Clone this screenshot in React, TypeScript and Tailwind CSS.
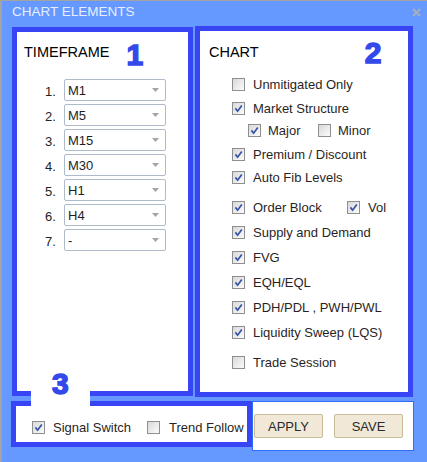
import { clsx } from "clsx";

const TIMEFRAMES = ["M1", "M5", "M15", "M30", "H1", "H4", "-"];

interface CheckProps {
  on?: boolean;
}

function Check({ on = false }: CheckProps) {
  return (
    <span className="flex h-[13px] w-[13px] shrink-0 items-center justify-center border border-[#8e9090] bg-linear-to-br from-[#d9d9d9] to-[#fbfbfb]">
      {on && (
        <svg width="9" height="9" viewBox="0 0 9 9">
          <path d="M1.4 4.4 L3.6 7.2 L7.8 1.4" fill="none" stroke="#3553a6" strokeWidth="1.7" />
        </svg>
      )}
    </span>
  );
}

function CheckItem({ label, on, gap = "ml-[8px]" }: { label: string; on?: boolean; gap?: string }) {
  return (
    <span className="flex items-center">
      <Check on={on} />
      <span className={clsx("text-[13px] leading-[15px] whitespace-nowrap text-[#2b1f1f]", gap)}>{label}</span>
    </span>
  );
}

function Select({ value }: { value: string }) {
  return (
    <div className="flex h-[22px] w-[102px] items-center rounded-[2px] border border-[#adbbcb] bg-white pr-[6px] pl-[3px]">
      <span className="text-[13px] leading-[15px] text-[#1e1e1e]">{value}</span>
      <svg className="ml-auto" width="7" height="4" viewBox="0 0 7 4">
        <polygon points="0,0 7,0 3.5,4" fill="#a4a4a4" />
      </svg>
    </div>
  );
}

// big outlined digit used as a section number
function SectionNo({ n, className }: { n: string; className?: string }) {
  return (
    <span
      className={clsx(
        "text-[30px] leading-[30px] font-bold text-[#3349ea] [-webkit-text-stroke:1.5px_#3349ea]",
        className
      )}
    >
      {n}
    </span>
  );
}

export default function App() {
  return (
    <div className="relative h-[462px] w-[427px] overflow-hidden border-t border-l-2 border-[#a3a3a3] bg-[#6599ff] font-['Liberation_Sans',Arial,sans-serif]">
      {/* title bar */}
      <div className="flex h-[21px] items-center justify-between pr-[4px] pl-[10px]">
        <span className="text-[13.5px] leading-[16px] text-[#e8eeff]">CHART ELEMENTS</span>
        <svg width="9" height="9" viewBox="0 0 9 9" className="mt-[1px] mr-[2px]">
          <path d="M1 1 L8 8 M8 1 L1 8" stroke="#a7aebd" strokeWidth="2" />
        </svg>
      </div>

      {/* timeframe + chart panels */}
      <div className="mt-[4px] flex items-start pl-[10px]">
        <div className="mt-[1px] h-[369px] w-[181px] border-[5px] border-[#3845f5] bg-white">
          <div className="flex h-[47px] items-start pl-[7px]">
            <span className="mt-[12px] text-[14.5px] leading-[17px] text-black">TIMEFRAME</span>
            <SectionNo n="1" className="mt-[8px] ml-[17px]" />
          </div>
          <div className="flex flex-col gap-[3px]">
            {TIMEFRAMES.map((tf, i) => (
              <div key={i} className="flex h-[22px] items-center pl-[28px]">
                <span className="mt-[2px] w-[19px] text-[13px] leading-[15px] text-[#222]">{i + 1}.</span>
                <Select value={tf} />
              </div>
            ))}
          </div>
        </div>

        <div className="ml-[2px] h-[371px] w-[218px] border-[5px] border-[#3845f5] bg-white">
          <div className="flex h-[47px] items-start pl-[9px]">
            <span className="mt-[13px] text-[14.5px] leading-[17px] text-black">CHART</span>
            <SectionNo n="2" className="mt-[7px] ml-[106px]" />
          </div>
          <div className="flex flex-col pl-[32px]">
            <div className="flex h-[13px] items-center">
              <CheckItem label="Unmitigated Only" />
            </div>
            <div className="mt-[11px] flex h-[13px] items-center">
              <CheckItem label="Market Structure" on />
            </div>
            <div className="mt-[9px] flex h-[13px] items-center pl-[16px]">
              <span className="w-[70px]">
                <CheckItem label="Major" on gap="ml-[7px]" />
              </span>
              <CheckItem label="Minor" gap="ml-[7px]" />
            </div>
            <div className="mt-[11px] flex h-[13px] items-center">
              <CheckItem label="Premium / Discount" on />
            </div>
            <div className="mt-[10px] flex h-[13px] items-center">
              <CheckItem label="Auto Fib Levels" on />
            </div>
            <div className="mt-[17px] flex h-[13px] items-center">
              <span className="w-[115px]">
                <CheckItem label="Order Block" on />
              </span>
              <CheckItem label="Vol" on />
            </div>
            <div className="mt-[12px] flex h-[13px] items-center">
              <CheckItem label="Supply and Demand" on />
            </div>
            <div className="mt-[12px] flex h-[13px] items-center">
              <CheckItem label="FVG" on />
            </div>
            <div className="mt-[12px] flex h-[13px] items-center">
              <CheckItem label="EQH/EQL" on />
            </div>
            <div className="mt-[12px] flex h-[13px] items-center">
              <CheckItem label="PDH/PDL , PWH/PWL" on />
            </div>
            <div className="mt-[12px] flex h-[13px] items-center">
              <CheckItem label="Liquidity Sweep (LQS)" on />
            </div>
            <div className="mt-[17px] flex h-[13px] items-center">
              <CheckItem label="Trade Session" />
            </div>
          </div>
        </div>
      </div>

      {/* signal panel + buttons */}
      <div className="mt-[4px] flex items-start pl-[9px]">
        <div className="h-[46px] w-[241px] border-[5px] border-[#3845f5] bg-white pt-[15px] pl-[16px]">
          <div className="flex h-[13px] items-center">
            <span className="w-[115px]">
              <CheckItem label="Signal Switch" on />
            </span>
            <CheckItem label="Trend Follow" gap="ml-[9px]" />
          </div>
        </div>
        <div className="flex h-[50px] w-[162px] items-center gap-[11px] border border-[#2f6cff] bg-white pl-[1px]">
          <button className="h-[24px] w-[69px] rounded-[2px] border border-[#c9bd97] bg-[#f1e8d8] text-[13px] leading-[15px] text-[#2a2a2a]">
            APPLY
          </button>
          <button className="h-[24px] w-[69px] rounded-[2px] border border-[#c9bd97] bg-[#f1e8d8] text-[13px] leading-[15px] text-[#2a2a2a]">
            SAVE
          </button>
        </div>
      </div>

      {/* section tag sitting across the panel edges */}
      <div className="absolute top-[389px] left-[29px] h-[16px] w-[59px] bg-white" />
      <SectionNo n="3" className="absolute top-[368px] left-[50px]" />
    </div>
  );
}
